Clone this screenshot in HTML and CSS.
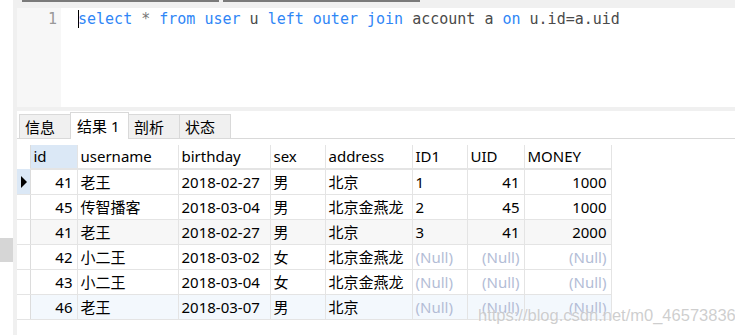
FILE: index.html
```html
<!DOCTYPE html>
<html lang="zh-CN">
<head>
    <meta charset="UTF-8">
    <title>Query Result</title>
    <link rel="stylesheet" href="styles.css">
</head>
<body>
    <div class="page">
        <div class="side">
            <div class="side-thumb"></div>
        </div>
        <div class="edge"></div>

        <div class="main">
            <div class="top-strip">
                <span class="bar"></span>
                <span class="bar"></span>
            </div>

            <div class="editor">
                <div class="gutter">1</div>
                <div class="code"><span class="caret"></span><span class="kw">select</span> <span class="op">*</span> <span class="kw">from</span> <span class="kw">user</span> u <span class="kw">left</span> <span class="kw">outer</span> <span class="kw">join</span> account a <span class="kw">on</span> u.id=a.uid</div>
            </div>

            <div class="sep"></div>

            <div class="tabs">
                <div class="tab">信息</div>
                <div class="tab active">结果 1</div>
                <div class="tab">剖析</div>
                <div class="tab">状态</div>
            </div>

            <table class="grid">
                <colgroup>
                    <col class="c-ind">
                    <col class="c-id">
                    <col class="c-user">
                    <col class="c-birth">
                    <col class="c-sex">
                    <col class="c-addr">
                    <col class="c-id1">
                    <col class="c-uid">
                    <col class="c-money">
                </colgroup>
                <thead>
                    <tr>
                        <th class="ind"></th>
                        <th class="sorted">id</th>
                        <th>username</th>
                        <th>birthday</th>
                        <th>sex</th>
                        <th>address</th>
                        <th>ID1</th>
                        <th>UID</th>
                        <th>MONEY</th>
                    </tr>
                </thead>
                <tbody>
                    <tr class="current">
                        <td class="ind"><span class="arrow"></span></td>
                        <td class="num">41</td><td>老王</td><td>2018-02-27</td><td>男</td><td>北京</td>
                        <td>1</td><td class="num">41</td><td class="num">1000</td>
                    </tr>
                    <tr>
                        <td class="ind"></td>
                        <td class="num">45</td><td>传智播客</td><td>2018-03-04</td><td>男</td><td>北京金燕龙</td>
                        <td>2</td><td class="num">45</td><td class="num">1000</td>
                    </tr>
                    <tr class="alt">
                        <td class="ind"></td>
                        <td class="num">41</td><td>老王</td><td>2018-02-27</td><td>男</td><td>北京</td>
                        <td>3</td><td class="num">41</td><td class="num">2000</td>
                    </tr>
                    <tr>
                        <td class="ind"></td>
                        <td class="num">42</td><td>小二王</td><td>2018-03-02</td><td>女</td><td>北京金燕龙</td>
                        <td class="null">(Null)</td><td class="num null">(Null)</td><td class="num null">(Null)</td>
                    </tr>
                    <tr>
                        <td class="ind"></td>
                        <td class="num">43</td><td>小二王</td><td>2018-03-04</td><td>女</td><td>北京金燕龙</td>
                        <td class="null">(Null)</td><td class="num null">(Null)</td><td class="num null">(Null)</td>
                    </tr>
                    <tr class="hover">
                        <td class="ind"></td>
                        <td class="num">46</td><td>老王</td><td>2018-03-07</td><td>男</td><td>北京</td>
                        <td class="null">(Null)</td><td class="num null">(Null)</td><td class="num null">(Null)</td>
                    </tr>
                </tbody>
            </table>
        </div>
    </div>

    <div class="watermark">https://blog.csdn.net/m0_46573836</div>
</body>
</html>
```

FILE: styles.css
```css
body {
    margin: 0;
    background-color: #ffffff;
    font-family: "Noto Sans", "Noto Sans CJK SC", sans-serif;
    color: #000;
    overflow: hidden;
}

.page {
    display: flex;
    height: 335px;
}

.side {
    width: 13px;
    background-color: #ffffff;
}

.side-thumb {
    margin-top: 238px;
    height: 24px;
    background-color: #d6d6d6;
}

.edge {
    width: 4px;
    background-color: #f0f0f0;
}

.main {
    flex: 1;
    display: flex;
    flex-direction: column;
}

.top-strip {
    height: 8px;
    background-color: #f0f0f0;
    display: flex;
    gap: 4px;
    padding-left: 5px;
}

.top-strip .bar {
    width: 197px;
    height: 2px;
    background-color: #7a7a7a;
}

.editor {
    height: 99px;
    display: flex;
    background-color: #ffffff;
}

.gutter {
    width: 44px;
    background-color: #f7f7f7;
    box-sizing: border-box;
    padding-right: 4px;
    text-align: right;
    font-family: "DejaVu Sans Mono", monospace;
    font-size: 15px;
    color: #999;
    line-height: 22px;
}

.code {
    padding-left: 17px;
    font-family: "DejaVu Sans Mono", monospace;
    font-size: 15px;
    line-height: 22px;
    color: #4a4a4a;
    white-space: pre;
}

.code .kw {
    color: #2f86f6;
}

.code .op {
    color: #777;
}

.caret {
    display: inline-block;
    width: 1px;
    height: 18px;
    margin-right: -1px;
    vertical-align: -4px;
    background-color: #000;
}

.sep {
    height: 4px;
    background-color: #f0f0f0;
}

.tabs {
    height: 27px;
    display: flex;
    align-items: flex-end;
    padding-left: 2px;
    border-bottom: 1px solid #d9d9d9;
}

.tab {
    width: 52px;
    height: 24px;
    box-sizing: border-box;
    border: 1px solid #d9d9d9;
    border-bottom: none;
    background-color: #f0f0f0;
    font-size: 15px;
    line-height: 24px;
    padding-left: 5px;
    margin-right: -1px;
}

.tab.active {
    width: 59px;
    height: 27px;
    margin-bottom: -1px;
    background-color: #ffffff;
    padding-left: 6px;
    line-height: 26px;
    position: relative;
}

.grid {
    align-self: flex-start;
    width: 594px;
    margin-top: 6px;
    border-collapse: collapse;
    table-layout: fixed;
    font-size: 15px;
}

.c-ind { width: 13px; }
.c-id { width: 47px; }
.c-user { width: 101px; }
.c-birth { width: 92px; }
.c-sex { width: 55px; }
.c-addr { width: 87px; }
.c-id1 { width: 55px; }
.c-uid { width: 57px; }
.c-money { width: 87px; }

.grid th,
.grid td {
    height: 24px;
    padding: 0 4px 0 3px;
    border-right: 1px solid #e4e4e4;
    border-bottom: 1px solid #e4e4e4;
    text-align: left;
    font-weight: normal;
    white-space: nowrap;
    overflow: hidden;
    line-height: 23px;
}

.grid th {
    height: 23px;
    border-bottom: 2px solid #e4e4e4;
}

.grid .ind {
    padding: 0;
    border-right: 1px solid #dcdcdc;
}

.grid th.ind {
    border-bottom: none;
}

.grid th.sorted {
    background-color: #dbe8f6;
}

.grid td.num {
    text-align: right;
}

.grid td.null {
    color: #b3bdd6;
}

.grid tr.current td.ind {
    background-color: #dbe8f6;
}

.grid tr.alt td {
    background-color: #f7f7f7;
}

.grid tr.hover td {
    background-color: #f3f8fd;
}

.grid tr.alt td.ind,
.grid tr.hover td.ind {
    background-color: #ffffff;
}

.arrow {
    display: block;
    width: 0;
    height: 0;
    margin-left: 4px;
    border-top: 6px solid transparent;
    border-bottom: 6px solid transparent;
    border-left: 6px solid #000;
}

.watermark {
    position: absolute;
    left: 478px;
    top: 306px;
    font-family: "Liberation Sans", sans-serif;
    font-size: 16.5px;
    color: rgba(190, 190, 190, 0.75);
    text-shadow: 0 0 2px #fff;
}
```
